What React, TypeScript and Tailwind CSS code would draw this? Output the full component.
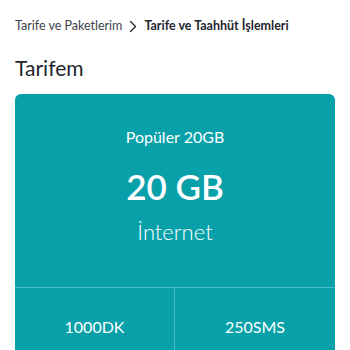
import React from 'react';

const App: React.FC = () => {
  return (
    <div className="w-[350px] h-[350px] overflow-hidden bg-white" style={{ fontFamily: 'Lato, "Noto Sans", sans-serif' }}>
      {/* Breadcrumb */}
      <div className="flex items-center px-[15px] pt-[17px] h-[35px] text-[12.5px] text-[#3c3f4a]">
        <span>Tarife ve Paketlerim</span>
        <svg className="mx-[6px] w-[10px] h-[13px]" viewBox="0 0 10 13" fill="none">
          <path d="M2.5 1.5 L7.5 6.5 L2.5 11.5" stroke="#23262f" strokeWidth="1.4" strokeLinecap="round" strokeLinejoin="round" />
        </svg>
        <span className="font-bold text-[#23262f]">Tarife ve Taahhüt İşlemleri</span>
      </div>

      {/* Title */}
      <h1 className="px-[15px] mt-[20px] text-[21px] leading-[26px] text-[#23262f]">Tarifem</h1>

      {/* Tariff card */}
      <div className="mx-[15px] mt-[13px] rounded-[6px] bg-[#08a1aa] text-white">
        <div className="flex flex-col items-center pt-[33px] h-[193px]">
          <div className="text-[16px] leading-[20px]">Popüler 20GB</div>
          <div className="mt-[17px] text-[35px] leading-[44px] font-semibold">20 GB</div>
          <div className="mt-[10px] text-[22px] leading-[28px] font-light">İnternet</div>
        </div>
        <div className="grid grid-cols-2 border-t border-[#48bcc3]">
          <div className="flex items-center justify-center h-[78px] border-r border-[#48bcc3] text-[16px]">1000DK</div>
          <div className="flex items-center justify-center h-[78px] text-[16px]">250SMS</div>
        </div>
      </div>
    </div>
  );
};

export default App;
